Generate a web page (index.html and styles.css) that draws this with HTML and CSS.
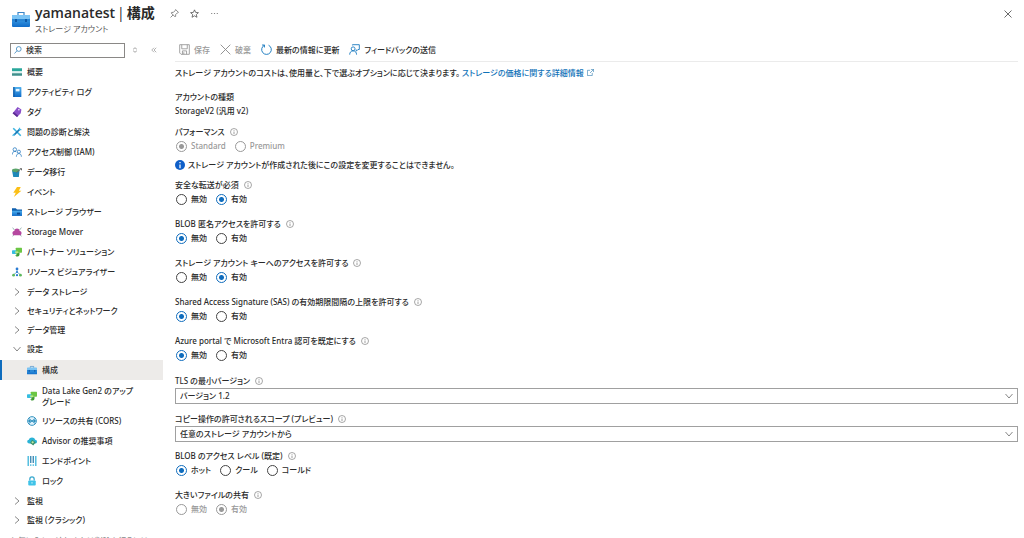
FILE: index.html
```
<!DOCTYPE html>
<html lang="ja">
<head>
  <meta charset="UTF-8">
  <title>yamanatest | 構成</title>
  <link rel="stylesheet" href="styles.css">
</head>
<body>
<svg class="defs" aria-hidden="true">
  <defs>
    <linearGradient id="blue" x1="0" y1="0" x2="0" y2="1">
      <stop offset="0" stop-color="#4fb0ee"/>
      <stop offset="1" stop-color="#0f6cc9"/>
    </linearGradient>
    <symbol id="info" viewBox="0 0 16 16">
      <circle cx="8" cy="8" r="7" fill="none" stroke="#777" stroke-width="1.3"/>
      <path d="M8 7v5M8 4v1.5" stroke="#777" stroke-width="1.4"/>
    </symbol>
    <symbol id="right" viewBox="0 0 16 16">
      <path d="M4 1l8 7-8 7" fill="none" stroke="#555" stroke-width="1.4"/>
    </symbol>
    <symbol id="down" viewBox="0 0 16 16">
      <path d="M1 4l7 8 7-8" fill="none" stroke="#555" stroke-width="1.4"/>
    </symbol>
    <symbol id="toolbox" viewBox="0 0 18 16">
      <path d="M6 4V1.5h6V4" fill="none" stroke="#3a86c8" stroke-width="1.2"/>
      <rect x="0" y="4" width="18" height="12" rx="1" fill="url(#blue)"/>
      <rect x="0" y="4" width="18" height="4" rx="1" fill="#7cc4f4"/>
      <path d="M0 9h18" stroke="#1f7acb" stroke-width="1"/>
      <path d="M3 8h2v3H3zM13 8h2v3h-2z" fill="#0f5aa8"/>
    </symbol>
    <symbol id="partner" viewBox="0 0 16 16">
      <rect x="6" y="1" width="10" height="8" rx="1" fill="#6cc644"/>
      <rect x="0" y="5" width="7" height="6" rx="1" fill="#35bde0"/>
      <path d="M7 9h5v3a3 3 0 0 1-3 3H7l-2-2h2z" fill="#3f9b35"/>
      <path d="M5 7h5v3H5z" fill="#b8e986"/>
    </symbol>
  </defs>
</svg>

<header class="header">
  <svg class="header-icon" viewBox="0 0 18 16"><use href="#toolbox"/></svg>
  <div class="header-text">
    <div class="title-row">
      <h1>yamanatest <span>|</span> 構成</h1>
      <button class="icon-btn" aria-label="ピン留め">
        <svg viewBox="0 0 16 16"><path d="M10 1l5 5-2 1-3 3v3l-1 1-7-7 1-1h3l3-3zM5.500 10.500L1 15" fill="none" stroke="#555" stroke-width="1.2"/></svg>
      </button>
      <button class="icon-btn" aria-label="お気に入り">
        <svg viewBox="0 0 16 16"><path d="M8 1.500l2 4.500 5 .5-3.800 3.300 1.200 4.900L8 12.100l-4.400 2.600 1.200-4.900L1 6.500 6 6z" fill="none" stroke="#444" stroke-width="1.3"/></svg>
      </button>
      <button class="icon-btn" aria-label="その他">
        <svg viewBox="0 0 16 16"><path d="M2 8h2M7 8h2M12 8h2" stroke="#777" stroke-width="1.6"/></svg>
      </button>
    </div>
    <p class="subtitle">ストレージ アカウント</p>
  </div>
  <button class="close-btn" aria-label="閉じる">
    <svg viewBox="0 0 16 16"><path d="M1 1l14 14M15 1L1 15" stroke="#444" stroke-width="1.6"/></svg>
  </button>
</header>

<div class="layout">
  <aside class="sidebar">
    <div class="search-row">
      <label class="search">
        <svg viewBox="0 0 16 16"><circle cx="9.500" cy="6" r="4.800" fill="none" stroke="#2f7fb8" stroke-width="1.5"/><path d="M6 9.500L1 15" stroke="#2f7fb8" stroke-width="1.5"/></svg>
        <input type="text" placeholder="検索" aria-label="検索">
      </label>
      <button class="mini-btn" aria-label="並べ替え">
        <svg viewBox="0 0 16 16"><path d="M3 6l5-4 5 4M3 10l5 4 5-4" fill="none" stroke="#777" stroke-width="1.8"/></svg>
      </button>
      <button class="mini-btn" aria-label="折りたたむ">
        <svg viewBox="0 0 16 16"><path d="M8 2L2 8l6 6M14 2L8 8l6 6" fill="none" stroke="#777" stroke-width="1.5"/></svg>
      </button>
    </div>

    <nav>
      <ul class="menu">
        <li><a href="#"><svg viewBox="0 0 16 16"><path d="M0 2h16v5H0z" fill="#2aa79b"/><path d="M0 7h16v3H0z" fill="#dff1f0"/><path d="M0 10h16v4H0z" fill="#3f8f8c"/></svg>概要</a></li>
        <li><a href="#"><svg viewBox="0 0 16 16"><rect x="2" y="0" width="13" height="16" rx="1" fill="url(#blue)"/><path d="M2 0h2v16H2z" fill="#0d5ba8"/><path d="M6 3h6v4H6z" fill="#e6f4ff"/></svg>アクティビティ ログ</a></li>
        <li><a href="#"><svg viewBox="0 0 16 16"><path d="M9 0l6 4-1 6-6 6-7-6z" fill="#8a4fc9"/><path d="M1 10l7 6 2-2-7-6z" fill="#5c2d91"/><circle cx="11" cy="4.500" r="1.200" fill="#fff"/></svg>タグ</a></li>
        <li><a href="#"><svg viewBox="0 0 16 16"><path d="M2 2l12 12" stroke="#3bb4e0" stroke-width="2.500"/><path d="M13 3L3 13" stroke="#1678b8" stroke-width="2.500"/><path d="M1 14l3-3M12 1v3h3" fill="none" stroke="#45b9e5" stroke-width="2"/></svg>問題の診断と解決</a></li>
        <li><a href="#"><svg viewBox="0 0 16 16"><g fill="none" stroke="#2b7cc0" stroke-width="1.300"><circle cx="4.500" cy="4" r="2.800"/><path d="M0.500 12c0-3 1.500-5 4-5 1.500 0 2.500.5 3 1.500"/><circle cx="11" cy="7.500" r="2.500"/><path d="M7 15.500c0-3 1.500-5 4-5s4 2 4 5"/></g></svg>アクセス制御 (IAM)</a></li>
        <li><a href="#"><svg viewBox="0 0 16 16"><path d="M0 5h12l-1 11H2z" fill="#1e88b8"/><ellipse cx="6" cy="5" rx="6" ry="2.800" fill="#5aa469"/><path d="M7 9l7-6" stroke="#666" stroke-width="1.500"/><path d="M12 2h4v4z" fill="#666"/></svg>データ移行</a></li>
        <li><a href="#"><svg viewBox="0 0 16 16"><path d="M8 0h6l-3 6h4L3 16l3-7H2z" fill="#fbbf16"/></svg>イベント</a></li>
        <li><a href="#"><svg viewBox="0 0 16 16"><path d="M0 2h6l2 2h8v10H0z" fill="#0f5fae"/><path d="M0 6h16v8H0z" fill="url(#blue)"/><path d="M8 9h5v3H8z" fill="#0b4a92"/></svg>ストレージ ブラウザー</a></li>
        <li><a href="#"><svg viewBox="0 0 16 16"><path d="M1 1l3 4M15 1l-3 4M1 15l3-4M15 15l-3-4" stroke="#8aa" stroke-width="1.300"/><path d="M2 13c-3-4 0-7 2-7 0-5 8-5 8 0 2 0 5 3 2 7z" fill="#b5489f"/></svg>Storage Mover</a></li>
        <li><a href="#"><svg viewBox="0 0 16 16"><use href="#partner"/></svg>パートナー ソリューション</a></li>
        <li><a href="#"><svg viewBox="0 0 16 16"><path d="M8 4v5M8 8l-5 4M8 8l5 4" stroke="#5a9bc5" stroke-width="1.300"/><circle cx="8" cy="3" r="2.200" fill="#2b7cd3"/><circle cx="8" cy="8" r="1.600" fill="#2b7cd3"/><circle cx="2.500" cy="13" r="2.200" fill="#5cb85c"/><circle cx="8" cy="13" r="1.800" fill="#2b7cd3"/><circle cx="13.500" cy="13" r="2.200" fill="#5cb85c"/></svg>リソース ビジュアライザー</a></li>
        <li class="group"><a href="#"><svg viewBox="0 0 16 16"><use href="#right"/></svg>データ ストレージ</a></li>
        <li class="group"><a href="#"><svg viewBox="0 0 16 16"><use href="#right"/></svg>セキュリティとネットワーク</a></li>
        <li class="group"><a href="#"><svg viewBox="0 0 16 16"><use href="#right"/></svg>データ管理</a></li>
        <li class="group"><a href="#"><svg viewBox="0 0 16 16"><use href="#down"/></svg>設定</a>
          <ul class="submenu">
            <li class="selected"><a href="#"><svg viewBox="0 0 18 16"><use href="#toolbox"/></svg>構成</a></li>
            <li class="tall"><a href="#"><svg viewBox="0 0 16 16"><use href="#partner"/></svg><span>Data Lake Gen2 のアップ<br>グレード</span></a></li>
            <li><a href="#"><svg viewBox="0 0 16 16"><circle cx="8" cy="8" r="7" fill="#dff1fb" stroke="#2d8fbd" stroke-width="1.500"/><path d="M3 4l10 8M13 4L3 12" stroke="#2d8fbd" stroke-width="1.500"/><circle cx="4" cy="8" r="2" fill="#2d8fbd"/><circle cx="12" cy="8" r="2" fill="#2d8fbd"/></svg>リソースの共有 (CORS)</a></li>
            <li><a href="#"><svg viewBox="0 0 16 16"><path d="M3 12c-4-1-3-6 0-6 1-5 9-5 10 0 4 0 4 6 0 6z" fill="#2bb3d6"/><path d="M8 6l6 4-4 5-5-4z" fill="#3a8f6b"/><circle cx="9" cy="10" r="1.800" fill="#bfe9a8"/></svg>Advisor の推奨事項</a></li>
            <li><a href="#"><svg viewBox="0 0 16 16"><path d="M2 0v16M14 0v16" stroke="#58bfe0" stroke-width="2.500"/><path d="M6 0v11M10 0v11" stroke="#2d7fae" stroke-width="2"/><path d="M6 13v3M10 13v3" stroke="#58bfe0" stroke-width="2"/></svg>エンドポイント</a></li>
            <li><a href="#"><svg viewBox="0 0 16 16"><path d="M4.500 7V5a3.500 3.500 0 0 1 7 0v2" fill="none" stroke="#3aa9cf" stroke-width="2"/><rect x="2" y="7" width="12" height="8" rx="1.500" fill="#3fc3e8"/><path d="M8 10v2" stroke="#fff" stroke-width="1.500"/></svg>ロック</a></li>
          </ul>
        </li>
        <li class="group"><a href="#"><svg viewBox="0 0 16 16"><use href="#right"/></svg>監視</a></li>
        <li class="group"><a href="#"><svg viewBox="0 0 16 16"><use href="#right"/></svg>監視 (クラシック)</a></li>
      </ul>
    </nav>
    <p class="hint">お気に入りの追加または削除を行うには</p>
  </aside>

  <main class="main">
    <div class="toolbar">
      <button disabled><svg viewBox="0 0 16 16"><path d="M1 1h14v14H3l-2-2zM4 1v6h8V1M5 15v-5h6v5M7 12v3" fill="none" stroke="#999" stroke-width="1.300"/></svg>保存</button>
      <button disabled><svg viewBox="0 0 16 16"><path d="M1 1l14 14M15 1L1 15" stroke="#888" stroke-width="1.300"/></svg>破棄</button>
      <button><svg viewBox="0 0 16 16"><path d="M11 1.800a7 7 0 1 1-6 0M5 5V1.500H1.500" fill="none" stroke="#1a7bc0" stroke-width="1.400"/></svg>最新の情報に更新</button>
      <button><svg viewBox="0 0 16 16"><g fill="none" stroke="#1a7bc0" stroke-width="1.300"><circle cx="6" cy="7" r="2.800"/><path d="M1 15.500c0-3.500 2-5.500 5-5.500s5 2 5 5.500M5 2V1h10v7h-2l-2.500 2.500V8"/></g></svg>フィードバックの送信</button>
    </div>

    <p class="intro">ストレージ アカウントのコストは、使用量と、下で選ぶオプションに応じて決まります。 <a href="#">ストレージの価格に関する詳細情報<svg viewBox="0 0 16 16"><path d="M7 3H1v12h11V9M9 1h6v6M15 1L7 9" fill="none" stroke="#1a6fa8" stroke-width="1.300"/></svg></a></p>

    <form>
      <div class="field tight">
        <div class="label">アカウントの種類</div>
        <div class="value">StorageV2 (汎用 v2)</div>
      </div>

      <div class="field tight" role="radiogroup" aria-labelledby="l-perf">
        <div class="label" id="l-perf">パフォーマンス<svg><use href="#info"/></svg></div>
        <div class="options">
          <label class="off"><input type="radio" name="perf" checked disabled>Standard</label>
          <label class="off"><input type="radio" name="perf" disabled>Premium</label>
        </div>
      </div>

      <p class="notice"><svg viewBox="0 0 16 16"><circle cx="8" cy="8" r="8" fill="#0f5fc8"/><path d="M8 7v6M8 3v2" stroke="#fff" stroke-width="2"/></svg>ストレージ アカウントが作成された後にこの設定を変更することはできません。</p>

      <div class="field" role="radiogroup" aria-labelledby="l-secure">
        <div class="label" id="l-secure">安全な転送が必須<svg><use href="#info"/></svg></div>
        <div class="options">
          <label><input type="radio" name="secure">無効</label>
          <label><input type="radio" name="secure" checked>有効</label>
        </div>
      </div>

      <div class="field" role="radiogroup" aria-labelledby="l-anon">
        <div class="label" id="l-anon">BLOB 匿名アクセスを許可する<svg><use href="#info"/></svg></div>
        <div class="options">
          <label><input type="radio" name="anon" checked>無効</label>
          <label><input type="radio" name="anon">有効</label>
        </div>
      </div>

      <div class="field" role="radiogroup" aria-labelledby="l-key">
        <div class="label" id="l-key">ストレージ アカウント キーへのアクセスを許可する<svg><use href="#info"/></svg></div>
        <div class="options">
          <label><input type="radio" name="key">無効</label>
          <label><input type="radio" name="key" checked>有効</label>
        </div>
      </div>

      <div class="field" role="radiogroup" aria-labelledby="l-sas">
        <div class="label" id="l-sas">Shared Access Signature (SAS) の有効期限間隔の上限を許可する<svg><use href="#info"/></svg></div>
        <div class="options">
          <label><input type="radio" name="sas" checked>無効</label>
          <label><input type="radio" name="sas">有効</label>
        </div>
      </div>

      <div class="field" role="radiogroup" aria-labelledby="l-entra">
        <div class="label" id="l-entra">Azure portal で Microsoft Entra 認可を既定にする<svg><use href="#info"/></svg></div>
        <div class="options">
          <label><input type="radio" name="entra" checked>無効</label>
          <label><input type="radio" name="entra">有効</label>
        </div>
      </div>

      <div class="field drop">
        <label class="label" for="tls">TLS の最小バージョン<svg><use href="#info"/></svg></label>
        <div class="select">
          <select id="tls"><option>バージョン 1.2</option></select>
          <svg><use href="#down"/></svg>
        </div>
      </div>

      <div class="field drop">
        <label class="label" for="scope">コピー操作の許可されるスコープ (プレビュー)<svg><use href="#info"/></svg></label>
        <div class="select">
          <select id="scope"><option>任意のストレージ アカウントから</option></select>
          <svg><use href="#down"/></svg>
        </div>
      </div>

      <div class="field" role="radiogroup" aria-labelledby="l-tier">
        <div class="label" id="l-tier">BLOB のアクセス レベル (既定)<svg><use href="#info"/></svg></div>
        <div class="options">
          <label><input type="radio" name="tier" checked>ホット</label>
          <label><input type="radio" name="tier">クール</label>
          <label><input type="radio" name="tier">コールド</label>
        </div>
      </div>

      <div class="field" role="radiogroup" aria-labelledby="l-large">
        <div class="label" id="l-large">大きいファイルの共有<svg><use href="#info"/></svg></div>
        <div class="options">
          <label class="off"><input type="radio" name="large" disabled>無効</label>
          <label class="off"><input type="radio" name="large" checked disabled>有効</label>
        </div>
      </div>
    </form>
  </main>
</div>
</body>
</html>
```
FILE: styles.css
```
* {
  box-sizing: border-box;
}

body {
  display: flex;
  flex-direction: column;
  height: 100vh;
  margin: 0;
  overflow: hidden;
  background: #fff;
  color: #2a2a2a;
  font-family: "Noto Sans", "Noto Sans CJK JP", sans-serif;
  font-size: 8px;
  font-weight: 500;
  line-height: 14px;
  font-feature-settings: "palt";
}

p, h1, ul {
  margin: 0;
  padding: 0;
}

ul {
  list-style: none;
}

a {
  color: inherit;
  text-decoration: none;
}

svg {
  flex: none;
}

button, input, select {
  font: inherit;
  font-feature-settings: inherit;
  color: inherit;
}

button {
  padding: 0;
  border: none;
  background: none;
  cursor: pointer;
}

.defs {
  position: absolute;
  width: 0;
  height: 0;
}

/* header */
.header {
  display: flex;
  align-items: flex-start;
  height: 42px;
  padding: 4px 11px 0 12px;
}

.header-icon {
  width: 18px;
  height: 16px;
  margin: 7px 5px 0 0;
}

.header-text {
  flex: 1;
}

.title-row {
  display: flex;
  align-items: center;
}

h1 {
  display: flex;
  gap: 2px;
  margin-right: 10px;
  font-family: "Open Sans", "Noto Sans CJK JP", sans-serif;
  font-size: 14px;
  font-weight: 600;
  line-height: 18px;
}

h1 span {
  font-weight: 400;
}

.icon-btn {
  display: flex;
  justify-content: center;
  width: 20px;
}

.icon-btn svg {
  width: 9px;
  height: 9px;
}

.subtitle {
  color: #555;
  font-weight: 400;
}

.close-btn {
  display: flex;
  margin-top: 6px;
  padding: 0 1px;
}

.close-btn svg {
  width: 8px;
  height: 8px;
}

.layout {
  display: flex;
  flex: 1;
  min-height: 0;
}

/* left menu */
.sidebar {
  flex: none;
  width: 163px;
  overflow: hidden;
}

.search-row {
  display: flex;
  align-items: center;
  height: 20px;
  padding: 0 0 4px 10px;
}

.search {
  display: flex;
  align-items: center;
  width: 115px;
  height: 15px;
  padding-left: 3px;
  border: 1px solid #8a8886;
}

.search svg {
  width: 8px;
  height: 8px;
}

.search input {
  width: 90px;
  padding: 0 0 0 4px;
  border: none;
  outline: none;
  background: none;
}

.search input::placeholder {
  color: #333;
}

.mini-btn {
  display: flex;
  justify-content: center;
  width: 19px;
}

.mini-btn svg {
  width: 6px;
  height: 6px;
}

.menu a {
  display: flex;
  align-items: center;
  height: 20px;
  padding-left: 12px;
}

.menu a svg {
  width: 10px;
  height: 10px;
  margin-right: 5px;
}

.menu .group > a {
  height: 19px;
}

.menu .group > a svg {
  width: 8px;
  height: 8px;
  margin: 0 6px 0 1px;
}

.submenu {
  padding-top: 2px;
}

.menu .submenu a {
  padding-left: 27px;
}

.menu .submenu .selected a {
  padding-left: 25px;
  border-left: 2px solid #0f6cbd;
  background: #edebe9;
}

.menu .submenu .tall a {
  height: 31px;
  line-height: 11px;
}

.hint {
  padding: 5px 0 0 10px;
  color: #888;
  white-space: nowrap;
}

/* settings */
.main {
  flex: 1;
  min-width: 0;
  padding: 0 6px 0 12px;
}

.toolbar {
  display: flex;
  gap: 10px;
  height: 20px;
  padding: 0 4px 4px;
  border-bottom: 1px solid #ebebeb;
}

.toolbar button {
  display: flex;
  align-items: center;
}

.toolbar svg {
  width: 11px;
  height: 11px;
  margin-right: 4px;
}

.toolbar button:disabled {
  color: #999;
  cursor: default;
}

.intro {
  margin: 4px 0 10px;
}

.intro a {
  color: #0f72b8;
}

.intro svg {
  width: 7px;
  height: 7px;
  margin-left: 3px;
}

.field {
  margin-bottom: 11px;
}

.field.tight {
  margin-bottom: 7px;
}

/* drop-downs sit a little lower under their label */
.field.drop {
  padding-top: 1px;
  margin-bottom: 7px;
}

.label {
  display: flex;
  align-items: center;
}

.label svg {
  width: 8px;
  height: 8px;
  margin-left: 5px;
}

.options {
  display: flex;
  gap: 8px;
}

.options label {
  display: flex;
  align-items: center;
}

.options .off {
  color: #999;
}

input[type="radio"] {
  appearance: none;
  width: 11px;
  height: 11px;
  margin: 0 4px 0 1px;
  border: 1px solid #444;
  border-radius: 50%;
}

input[type="radio"]:checked {
  border-color: #0f6cbd;
  background: radial-gradient(circle, #0f6cbd 2px, #fff 3px);
}

input[type="radio"]:disabled {
  border-color: #999;
}

input[type="radio"]:disabled:checked {
  background: radial-gradient(circle, #999 2px, #fff 3px);
}

.notice {
  display: flex;
  align-items: center;
  margin: -2px 0 6px;
}

.notice svg {
  width: 10px;
  height: 10px;
  margin-right: 3px;
}

.select {
  position: relative;
}

.select select {
  display: block;
  width: 100%;
  height: 16px;
  padding: 0 4px;
  appearance: none;
  border: 1px solid #a0a0a0;
  border-radius: 0;
  background: #fff;
}

.select svg {
  position: absolute;
  top: 4px;
  right: 5px;
  width: 8px;
  height: 8px;
  pointer-events: none;
}
```
